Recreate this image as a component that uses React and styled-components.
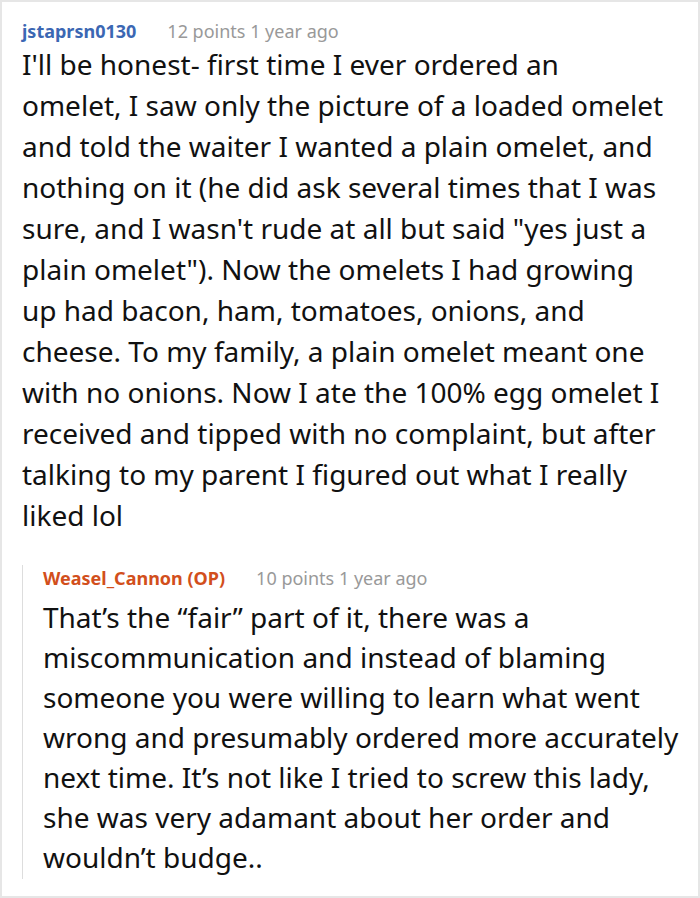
import React from "react";
import styled, { createGlobalStyle } from "styled-components";

const GlobalStyle = createGlobalStyle`
  html, body {
    margin: 0;
    padding: 0;
    background: #fff;
  }
  * {
    box-sizing: border-box;
  }
`;

const Frame = styled.div`
  width: 700px;
  height: 898px;
  border: 2px solid #e6e6e6;
  padding: 16px 33px 0 20px;
  font-family: "Noto Sans", "Open Sans", sans-serif;
  color: #111;
  overflow: hidden;
`;

const Head = styled.div`
  display: flex;
  align-items: center;
  gap: 31px;
  height: 26px;
  font-size: 18px;
  margin-top: ${props => props.$shift || 0}px;
`;

const User = styled.span`
  font-weight: 700;
  color: ${props => props.$color};
`;

const Meta = styled.span`
  color: #999;
`;

const Body = styled.p`
  margin: ${props => props.$gap}px 0 0;
  font-size: 28px;
  line-height: ${props => props.$lh}px;
`;

const Reply = styled.div`
  box-sizing: content-box;
  width: 100%;
  margin-top: 41px;
  border-left: 1px solid #ddd;
  padding-left: 20px;
  padding-bottom: 2px;
`;

const comments = {
  main: {
    user: "jstaprsn0130",
    meta: "12 points 1 year ago",
    text:
      "I'll be honest- first time I ever ordered an omelet, I saw only the picture of a loaded omelet and told the waiter I wanted a plain omelet, and nothing on it (he did ask several times that I was sure, and I wasn't rude at all but said \"yes just a plain omelet\"). Now the omelets I had growing up had bacon, ham, tomatoes, onions, and cheese. To my family, a plain omelet meant one with no onions. Now I ate the 100% egg omelet I received and tipped with no complaint, but after talking to my parent I figured out what I really liked lol",
  },
  reply: {
    user: "Weasel_Cannon (OP)",
    meta: "10 points 1 year ago",
    text:
      "That\u2019s the \u201cfair\u201d part of it, there was a miscommunication and instead of blaming someone you were willing to learn what went wrong and presumably ordered more accurately next time. It\u2019s not like I tried to screw this lady, she was very adamant about her order and wouldn\u2019t budge..",
  },
};

export default function App() {
  const { main, reply } = comments;
  return (
    <>
      <GlobalStyle />
      <Frame>
        <Head>
          <User $color="#3b67b3">{main.user}</User>
          <Meta>{main.meta}</Meta>
        </Head>
        <Body $gap={0} $lh={41}>{main.text}</Body>
        <Reply>
          <Head $shift={-12}>
            <User $color="#d24f1c">{reply.user}</User>
            <Meta>{reply.meta}</Meta>
          </Head>
          <Body $gap={6} $lh={40}>{reply.text}</Body>
        </Reply>
      </Frame>
    </>
  );
}
